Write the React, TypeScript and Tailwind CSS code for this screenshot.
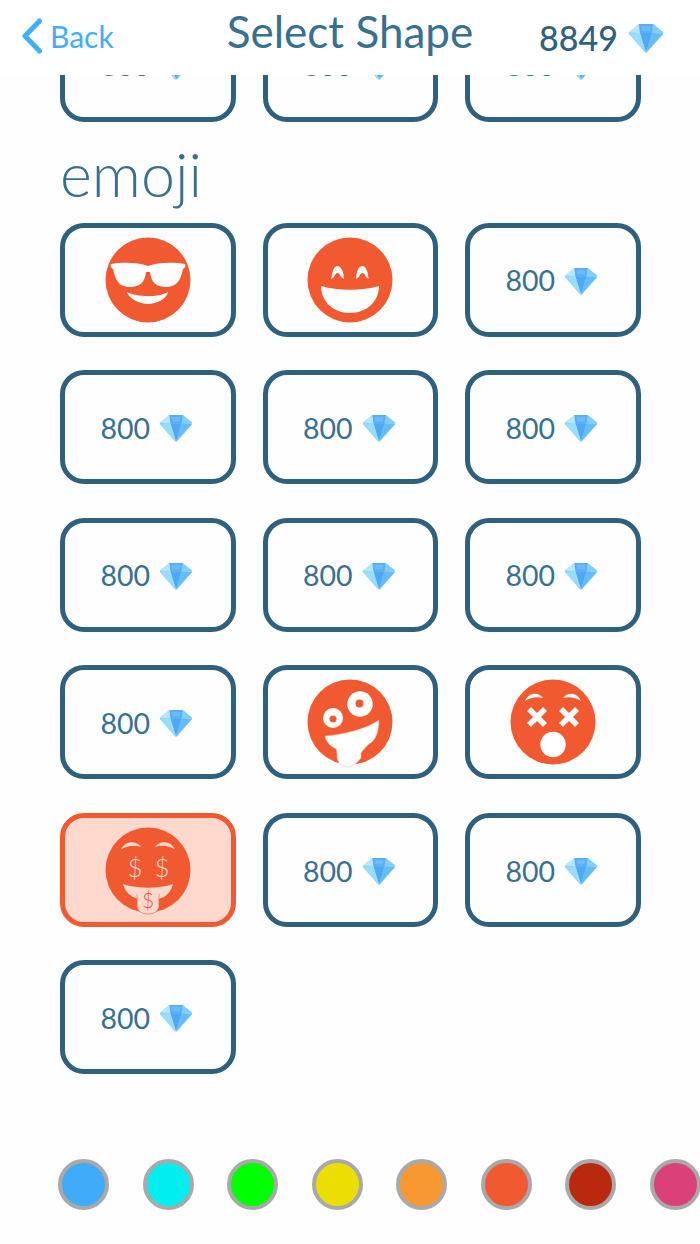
import React from "react";

const FONT = { fontFamily: "Lato, sans-serif" };
const OR = "#f15a30";

function Diamond({ className }: { className: string }) {
  return (
    <svg viewBox="0 0 36 30" className={className}>
      <polygon points="11,1 25,1 35.5,9.5 35,11 19,29.5 17,29.5 1,11 0.5,9.5" fill="#8fd3fb" />
      <polygon points="11,1 12,10 0.5,9.5" fill="#b4e6fd" />
      <polygon points="25,1 24,10 35.5,9.5" fill="#7fcdf9" />
      <polygon points="11,1 25,1 24,10 12,10" fill="#57aef4" />
      <polygon points="13,3 23,3 22,8 14,8" fill="#6bbcf6" />
      <polygon points="12,10 24,10 18,29.5" fill="#4fa8f3" />
      <polygon points="1,11 12,10 18,29.5" fill="#9adcfb" />
      <polygon points="24,10 35,11 18,29.5" fill="#66bcf7" />
    </svg>
  );
}

function Face({ children }: { children: React.ReactNode }) {
  return (
    <svg viewBox="-44 -44 88 92" className="w-[88px] h-[92px] mt-[4px]">
      <circle cx="0" cy="0" r="42.5" fill={OR} />
      {children}
    </svg>
  );
}

const Cool = () => (
  <Face>
    <path
      fill="#fff"
      d="M-37,-16 C-25,-18 -11,-18 0,-14 C11,-18 25,-18 37,-16 C38,-14 37,-12 35,-11 C33,-3 31,7 18,7 C8,7 3,2 2,-8 L-2,-8 C-3,2 -8,7 -18,7 C-31,7 -33,-3 -35,-11 C-37,-12 -38,-14 -37,-16 Z"
    />
    <path fill="#fff" d="M-21,12 C-12,17 10,18 20,12 C19,19 8,24 0,24 C-8,24 -19,19 -21,12 Z" />
  </Face>
);

const Grin = () => (
  <Face>
    <path fill="#fff" d="M-18.5,-1 C-18,-10 -15.5,-14 -12.5,-14 C-9,-14 -6.5,-9 -6,-1 L-9,-3 C-10,-5.5 -11,-7 -12.5,-7 C-14,-7 -15,-5.5 -16,-3 Z" />
    <path fill="#fff" d="M6,-1 C6.5,-10 9,-14 12.5,-14 C15.5,-14 18,-9 18.5,-1 L16,-3 C15,-5.5 14,-7 12.5,-7 C11,-7 10,-5.5 9,-3 Z" />
    <path fill="#fff" d="M-29,6 C-12,11 12,11 29,6 C29,22 16,33 0,33 C-16,33 -29,22 -29,6 Z" />
  </Face>
);

const Crazy = () => (
  <Face>
    <path
      fill="#fff"
      stroke="#f9a58c"
      strokeWidth="0.5"
      d="M-25,14 C-8,13 16,7 29,-2 C29,8 26,19 19,22 C16,25 13,28 11,31 L11,36 C7,41 3,45 -2,45 C-8,45 -12,41 -13,36 C-13,32 -13,29 -14,27 C-20,24 -24,20 -25,14 Z"
    />
    <circle cx="10" cy="-18" r="12.7" fill="#fff" />
    <circle cx="9.5" cy="-18.5" r="4" fill={OR} />
    <circle cx="-17" cy="-4" r="10" fill="#fff" />
    <circle cx="-17" cy="-3" r="3.5" fill={OR} />
  </Face>
);

const Dead = () => (
  <Face>
    <path fill="#fff" d="M-28,-21 C-25,-29 -15,-31 -10,-24 C-16,-25.5 -22,-25 -28,-21 Z" />
    <path fill="#fff" d="M28,-21 C25,-29 15,-31 10,-24 C16,-25.5 22,-25 28,-21 Z" />
    <g stroke="#fff" strokeWidth="5.5">
      <path d="M-24,-13 L-8,3 M-8,-13 L-24,3" />
      <path d="M8,-13 L24,3 M24,-13 L8,3" />
    </g>
    <circle cx="0" cy="22.5" r="12.7" fill="#fff" />
  </Face>
);

const Money = () => {
  const pink = "#ffd9cd";
  return (
    <Face>
      <path fill={pink} d="M-27,-20.5 C-23,-29 -12,-30 -7,-23 C-13,-25 -20,-25 -27,-20.5 Z" />
      <path fill={pink} d="M27,-20.5 C23,-29 12,-30 7,-23 C13,-25 20,-25 27,-20.5 Z" />
      <text x="-13" y="7" textAnchor="middle" fontSize="26" fill={pink} style={FONT} fontWeight="300">$</text>
      <text x="14" y="7" textAnchor="middle" fontSize="26" fill={pink} style={FONT} fontWeight="300">$</text>
      <path fill={pink} d="M-25,14 C-10,19 10,19 25,14 C23,22 18,27 11,29 L-10,29 C-17,27 -23,22 -25,14 Z" />
      <path fill={pink} stroke={OR} strokeWidth="0.6" d="M-11,24 L11,24 L11,36 C11,41 6,44 0,44 C-6,44 -11,41 -11,36 Z" />
      <path fill={pink} d="M-10.7,22 L10.7,22 L10.7,26 L-10.7,26 Z" />
      <text x="0" y="38" textAnchor="middle" fontSize="21" fill={OR} style={FONT} fontWeight="300">$</text>
    </Face>
  );
};

function Price() {
  return (
    <div className="flex items-center gap-[9px] pr-[2px] pt-[2px] text-[#38708f] text-[28.5px] leading-none" style={FONT}>
      <span>800</span>
      <Diamond className="w-[34px] h-[28px]" />
    </div>
  );
}

function Card({ children, active }: { children?: React.ReactNode; active?: boolean }) {
  return (
    <div
      className={
        active
          ? "h-[114px] rounded-[24px] border-[5px] border-[#f15a30] bg-[#ffd9cd] flex items-center justify-center"
          : "h-[114px] rounded-[24px] border-[5px] border-[#2f617f] bg-[#fefefe] flex items-center justify-center"
      }
    >
      {children ?? <Price />}
    </div>
  );
}

const rows: (React.ReactNode | undefined)[][] = [
  [<Cool />, <Grin />, undefined],
  [undefined, undefined, undefined],
  [undefined, undefined, undefined],
  [undefined, <Crazy />, <Dead />],
];

const colors = ["#3fabf9", "#00eeee", "#00ff00", "#ecdf00", "#f89830", "#f15a30", "#bb2810", "#dc4078"];

export default function App() {
  return (
    <div className="w-[700px] h-[1244px] bg-[#fefefe] flex flex-col overflow-hidden" style={FONT}>
      <header className="h-[75px] shrink-0 grid grid-cols-[1fr_auto_1fr] items-center px-[21px] bg-white relative z-10">
        <div className="flex items-center gap-[7px] text-[#3eb0fb] text-[30px] leading-none -mt-[3px]">
          <svg viewBox="0 0 22 36" className="w-[22px] h-[36px]">
            <path d="M18.5,3 L4,18 L18.5,33" fill="none" stroke="#3eb0fb" strokeWidth="5" strokeLinecap="round" strokeLinejoin="round" />
          </svg>
          <span>Back</span>
        </div>
        <h1 className="text-[44px] leading-none font-normal text-[#38708f] -mt-[13px]">Select Shape</h1>
        <div className="flex items-center justify-end gap-[10px] text-[34px] leading-none font-medium text-[#2f617f] pr-[15px]">
          <span>8849</span>
          <Diamond className="w-[36px] h-[30px]" />
        </div>
      </header>

      <main className="flex-1 overflow-hidden pl-[60px]">
        <div className="-mt-[67.5px] w-[580px]">
          <div className="grid grid-cols-[175.5px_175.5px_175.5px] gap-x-[27px]">
            <Card />
            <Card />
            <Card />
          </div>
          <h2 className="h-[101px] flex items-end pb-[19px] text-[61px] leading-none font-light text-[#38708f]">emoji</h2>
          <div className="grid grid-cols-[175.5px_175.5px_175.5px] gap-x-[27px] gap-y-[33.6px]">
            {rows.flat().map((c, i) => (
              <Card key={i}>{c}</Card>
            ))}
            <Card active>
              <Money />
            </Card>
            <Card />
            <Card />
            <Card />
          </div>
        </div>
      </main>

      <footer className="shrink-0 flex gap-[33.5px] pl-[58px] pb-[34px] overflow-hidden">
        {colors.map((c) => (
          <div
            key={c}
            className="w-[51px] h-[51px] shrink-0 rounded-full border-[4px] border-[#a9a9a9]"
            style={{ backgroundColor: c }}
          />
        ))}
      </footer>
    </div>
  );
}
